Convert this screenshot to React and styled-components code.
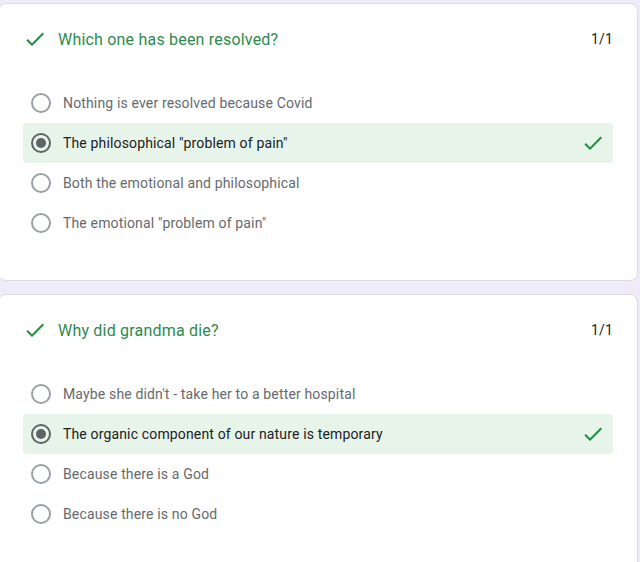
import React from "react";
import styled, { createGlobalStyle } from "styled-components";

const GlobalStyle = createGlobalStyle`
  html, body {
    margin: 0;
    padding: 0;
    background: #f0ebf8;
  }
  body {
    font-family: Roboto, "Liberation Sans", Arial, sans-serif;
  }
`;

const questions = [
  {
    title: "Which one has been resolved?",
    score: "1/1",
    options: [
      "Nothing is ever resolved because Covid",
      'The philosophical "problem of pain"',
      "Both the emotional and philosophical",
      'The emotional "problem of pain"',
    ],
    chosen: 1,
  },
  {
    title: "Why did grandma die?",
    score: "1/1",
    options: [
      "Maybe she didn't - take her to a better hospital",
      "The organic component of our nature is temporary",
      "Because there is a God",
      "Because there is no God",
    ],
    chosen: 1,
  },
];

function Check({ size = 24 }) {
  return (
    <svg width={size} height={size} viewBox="0 0 24 24" fill="#1e8e3e">
      <path d="M9 16.17L4.83 12l-1.42 1.41L9 19 21 7l-1.41-1.41z" />
    </svg>
  );
}

export default function App() {
  return (
    <Page>
      <GlobalStyle />
      {questions.map((q) => (
        <Card key={q.title}>
          <Header>
            <Check size={24} />
            <Title>{q.title}</Title>
            <Score>{q.score}</Score>
          </Header>
          <Options>
            {q.options.map((opt, i) => (
              <Option key={opt} $selected={i === q.chosen}>
                <Radio $selected={i === q.chosen} />
                <Label $selected={i === q.chosen}>{opt}</Label>
                {i === q.chosen && <Check size={24} />}
              </Option>
            ))}
          </Options>
        </Card>
      ))}
    </Page>
  );
}

const Page = styled.div`
  display: flex;
  flex-direction: column;
  gap: 13px;
  padding-top: 3px;
  width: 640px;
`;

const Card = styled.section`
  box-sizing: border-box;
  width: 640px;
  margin-left: -2px;
  background: #fff;
  border: 1px solid #dadce0;
  border-radius: 8px;
  padding: 23px 24px 37px 24px;
`;

const Header = styled.div`
  display: flex;
  align-items: center;
  height: 24px;
  gap: 11px;
`;

const Title = styled.div`
  flex: 1;
  font-size: 16px;
  color: #2d8a4e;
  letter-spacing: 0.2px;
`;

const Score = styled.div`
  font-size: 14px;
  color: #202124;
  letter-spacing: 0.2px;
`;

const Options = styled.div`
  margin-top: 32px;
  display: flex;
  flex-direction: column;
`;

const Option = styled.div`
  display: flex;
  align-items: center;
  height: 40px;
  padding: 0 8px 0 8px;
  gap: 12px;
  border-radius: 4px;
  background: ${(p) => (p.$selected ? "#e6f4ea" : "transparent")};
`;

const Radio = styled.span`
  box-sizing: border-box;
  flex: none;
  width: 20px;
  height: 20px;
  border-radius: 50%;
  border: 2px solid ${(p) => (p.$selected ? "#5f6368" : "#9aa0a6")};
  display: flex;
  align-items: center;
  justify-content: center;
  &::after {
    content: "";
    display: ${(p) => (p.$selected ? "block" : "none")};
    width: 10px;
    height: 10px;
    border-radius: 50%;
    background: #5f6368;
  }
`;

const Label = styled.span`
  flex: 1;
  font-size: 14px;
  letter-spacing: 0.15px;
  color: ${(p) => (p.$selected ? "#202124" : "#666a6e")};
`;
